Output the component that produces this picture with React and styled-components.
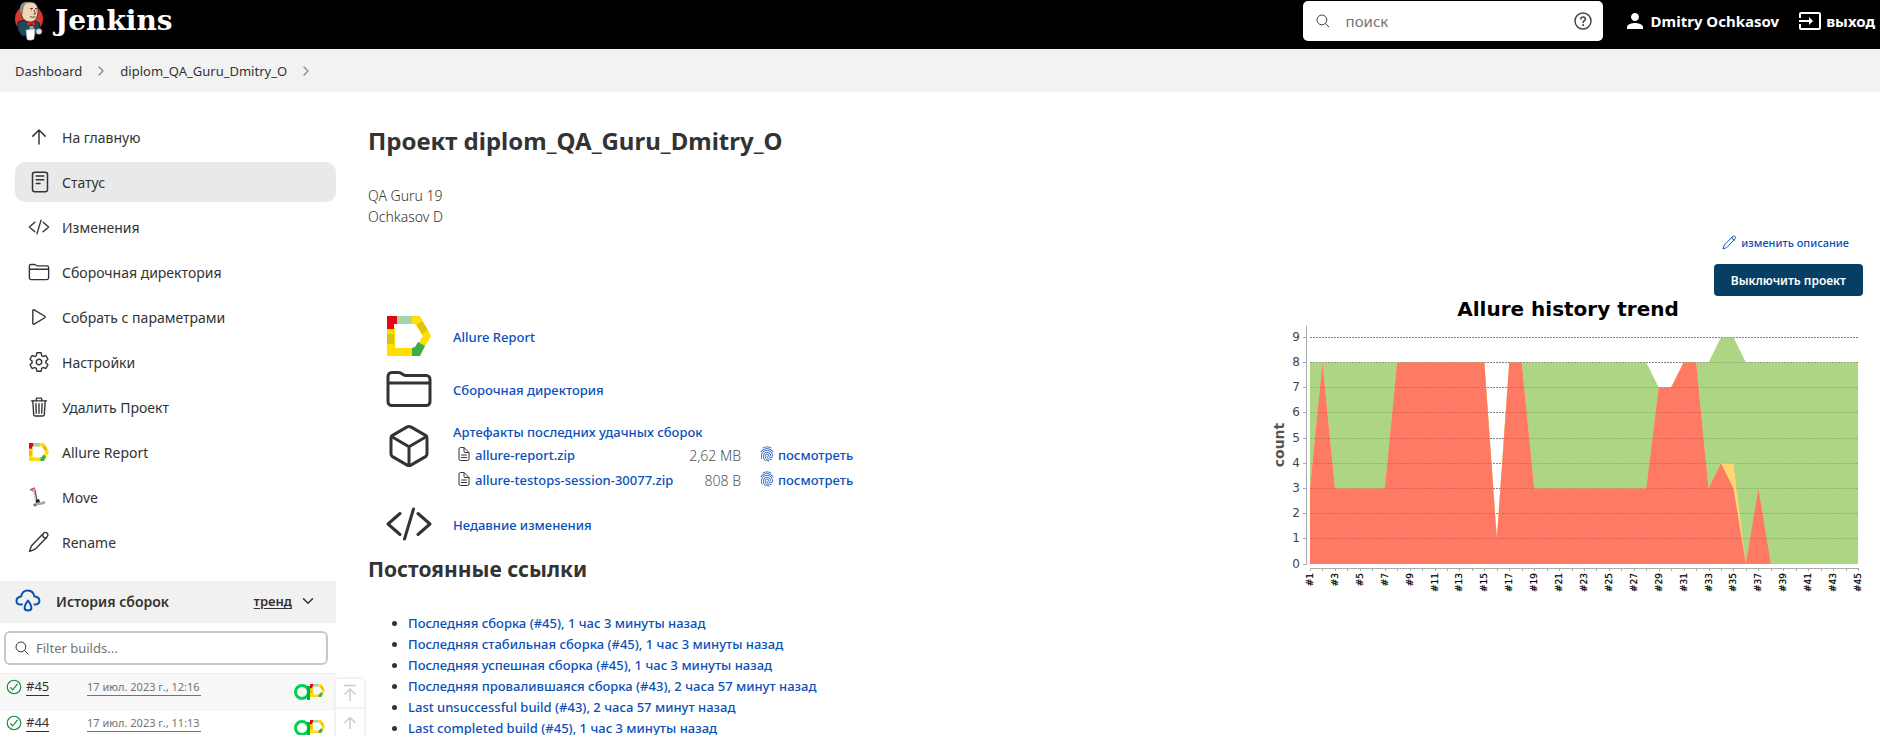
import React from "react";
import styled, { createGlobalStyle, css } from "styled-components";
import {
  IoReaderOutline,
  IoCodeSlashOutline,
  IoFolderOutline,
  IoPlayOutline,
  IoSettingsOutline,
  IoTrashOutline,
  IoCubeOutline,
  IoDocumentTextOutline,
  IoFingerPrintOutline,
  IoSearchOutline,
  IoChevronDownOutline,
  IoChevronForwardOutline,
  IoCheckmarkCircleOutline,
} from "react-icons/io5";
import { MdInput, MdPerson } from "react-icons/md";

const color = {
  text: "#333",
  link: "#0b50b8",
  muted: "#737373",
  bar: "#f2f2f2",
  primary: "#063f63",
};

const Global = createGlobalStyle`
  *, *::before, *::after { box-sizing: border-box; }
  body {
    margin: 0;
    background: #fff;
    color: ${color.text};
    font-family: "Noto Sans", "Open Sans", sans-serif;
    font-size: 13px;
    line-height: 21px;
  }
  h1, h2, p, ul { margin: 0; padding: 0; }
  a { color: inherit; text-decoration: none; }
  svg { display: block; flex-shrink: 0; }
`;

const Page = styled.div`
  height: 100vh;
  overflow: hidden;
`;

/* ---------- header ---------- */

const Header = styled.header`
  display: flex;
  align-items: center;
  height: 49px;
  padding: 1px 5px 8px 15px;
  background: #000;
  color: #fff;
`;

const Brand = styled.a`
  display: flex;
  align-items: center;
  gap: 12px;
  margin-right: auto;
  font: 700 28px/36px "DejaVu Serif", serif;
`;

const SearchField = styled.label`
  display: flex;
  align-items: center;
  width: 300px;
  height: 40px;
  padding: 0 10px 0 12px;
  border-radius: 5px;
  background: #fff;
  color: #3d444d;
`;

const SearchInput = styled.input`
  flex: 1;
  min-width: 0;
  margin-left: 15px;
  padding: 0;
  border: 0;
  outline: 0;
  background: none;
  font: inherit;
  font-size: 15px;
  color: ${color.text};
  &::placeholder { color: ${color.muted}; opacity: 1; }
`;

const HeaderLink = styled.a`
  display: flex;
  align-items: center;
  gap: 4px;
  margin-left: 19px;
  font-size: 15px;
  font-weight: 700;
`;

const UserLink = styled(HeaderLink)`
  margin-left: 20px;
`;

const Crumbs = styled.nav`
  display: flex;
  align-items: center;
  gap: 12px;
  height: 43px;
  padding: 1px 15px 0;
  background: ${color.bar};
  svg { color: #8a8a8a; }
`;

/* ---------- sidebar ---------- */

const Body = styled.div`
  display: flex;
  align-items: flex-start;
`;

const Side = styled.aside`
  flex: 0 0 336px;
  padding-top: 25px;
`;

const Menu = styled.nav`
  display: flex;
  flex-direction: column;
  gap: 5px;
  padding-left: 15px;
`;

const MenuItem = styled.a`
  display: flex;
  align-items: center;
  gap: 12px;
  height: 40px;
  padding-left: 13px;
  border-radius: 10px;
  font-size: 14px;
  ${(p) => p.$active && css`background: #e9e9e9;`}
`;

const MenuIcon = styled.span`
  display: grid;
  place-items: center;
  width: 22px;
`;

const HistoryHead = styled.div`
  display: flex;
  align-items: center;
  height: 42px;
  margin-top: 19px;
  padding: 0 20px 2px 15px;
  background: #f1f1f1;
`;

const HistoryTitle = styled.h2`
  flex: 1;
  margin-left: 15px;
  font-size: 14px;
  font-weight: 600;
`;

const TrendLink = styled.a`
  margin-right: 8px;
  font-weight: 600;
  text-decoration: underline;
  text-underline-offset: 2px;
`;

const Filter = styled.label`
  display: flex;
  align-items: center;
  height: 34px;
  margin: 8px 8px 8px 4px;
  padding: 0 8px;
  border: 2px solid #c0cbd0;
  border-radius: 6px;
`;

const FilterInput = styled(SearchInput)`
  margin-left: 6px;
  font-size: 13px;
`;

const Builds = styled.table`
  width: 100%;
  table-layout: fixed;
  border-collapse: collapse;
  td { padding: 0; vertical-align: top; }
  td:first-child { width: 87px; }
  td:last-child { width: 60px; }
`;

const BuildRow = styled.tr`
  height: 36px;
  border-top: 1px solid #eee;
  background: ${(p) => (p.$odd ? "#f8f8f8" : "#fff")};
`;

const BuildNumber = styled.a`
  display: flex;
  align-items: center;
  gap: 3px;
  padding: 4px 0 0 5px;
  svg { color: #138a36; }
  span { border-bottom: 1px solid currentColor; line-height: 17px; }
`;

const BuildDate = styled.a`
  display: inline-block;
  margin-top: 5px;
  padding-right: 1px;
  border-bottom: 1px solid currentColor;
  color: ${color.muted};
  font-size: 11px;
  line-height: 16px;
`;

const Badges = styled.div`
  display: flex;
  justify-content: flex-end;
  padding: 10px 11px 0 0;
`;

const ScrollTools = styled.div`
  display: flex;
  flex-direction: column;
  width: 32px;
  margin: 585px 0 0 -2px;
  border: 2px solid #f1f1f1;
  border-radius: 6px;
`;

const ScrollButton = styled.button`
  display: grid;
  place-items: center;
  height: 30px;
  padding: 0;
  border: 0;
  border-bottom: 2px solid #f4f4f4;
  background: #fff;
  color: #ccc;
`;

/* ---------- main ---------- */

const Main = styled.main`
  flex: 1;
  min-width: 0;
  margin-left: 2px;
  padding-top: 30px;
`;

const Title = styled.h1`
  font-size: 24px;
  font-weight: 700;
  line-height: 38px;
`;

const Description = styled.p`
  margin-top: 25px;
  font-size: 14px;
  font-weight: 300;
`;

const Summary = styled.ul`
  display: flex;
  flex-direction: column;
  margin-top: 84px;
  padding-left: 17px;
  list-style: none;
`;

const Link = styled.a`
  color: ${color.link};
  font-weight: 500;
`;

const SummaryItem = styled.li`
  display: flex;
  align-items: ${(p) => (p.$top ? "flex-start" : "center")};
  gap: 20px;
  height: ${(p) => p.$height}px;
  padding-top: ${(p) => (p.$top ? 5 : 0)}px;
  > svg { width: 48px; height: 48px; color: ${color.text}; }
  > ${Link} { padding-top: 3px; }
`;

const Artifacts = styled.table`
  border-collapse: collapse;
  white-space: nowrap;
  td { height: 25px; padding: 0; vertical-align: middle; }
  svg { margin-bottom: 4px; }
`;

const FileCell = styled.td`
  width: 223px;
  > * { display: flex; align-items: center; gap: 3px; }
  svg { color: ${color.text}; margin-left: 3px; }
`;

const SizeCell = styled.td`
  width: 65px;
  text-align: right;
  color: #555;
  font-size: 14px;
  font-weight: 300;
`;

const ViewCell = styled.td`
  > * { display: flex; align-items: center; gap: 3px; margin-left: 18px; }
`;

const Heading = styled.h2`
  margin-top: 3px;
  font-size: 21px;
  font-weight: 700;
  line-height: 32px;
`;

const Permalinks = styled.ul`
  margin-top: 28px;
  padding-left: 40px;
`;

/* ---------- right column ---------- */

const Trend = styled.section`
  display: flex;
  flex-direction: column;
  align-items: flex-end;
  flex: 0 0 600px;
  margin: 140px 17px 0 0;
`;

const EditLink = styled(Link)`
  display: flex;
  align-items: center;
  gap: 4px;
  margin-right: 14px;
  font-size: 11px;
`;

const DisableButton = styled.button`
  height: 32px;
  margin-top: 11px;
  padding: 1px 17px 0;
  border: 0;
  border-radius: 4px;
  background: ${color.primary};
  color: #fff;
  font: 600 12px/20px "Noto Sans", "Open Sans", sans-serif;
`;

/* ---------- drawings ---------- */

const JenkinsLogo = () => (
  <svg width="28" height="40" viewBox="0 0 28 40" aria-hidden="true">
    <ellipse cx="14" cy="18" rx="14" ry="14" fill="#d33833" />
    <path d="M3 21 10 19l5 6 5-5 4 2 2 8-7 5H7l-4-6z" fill="#1d4a5c" stroke="#0e1c22" strokeWidth="1" />
    <path d="M6 9C6 3 10 1 15 1s8 3 8 9c0 8-4 11-8 11C9 21 6 16 6 9z" fill="#f0d6b7" stroke="#3a2d26" strokeWidth=".8" />
    <path d="M5 10C4 4 8 0 13 1c-4 2-5 6-5 12-2 0-3-1-3-3z" fill="#8c8987" />
    <path d="M15 7.500h3M20 7.500h2M16 9h1M20.500 9h1M19 9l1.500 4h-2M15 15.500c2 1 4 1 5.500 0" fill="none" stroke="#50382c" strokeWidth=".9" />
    <path d="M12 20l4 2.500 4-2.500v5l-4-1.500-4 2z" fill="#e02b26" stroke="#721513" strokeWidth=".5" />
    <path d="M14.500 25h4v4h-4z" fill="#8ea6b0" />
    <path d="M11 29l9-1-1 10c-2 1.500-5 1.500-7 .5z" fill="#fff" stroke="#aaa" strokeWidth=".5" />
    <circle cx="24" cy="30.500" r="3" fill="#dfe3e6" stroke="#444" strokeWidth=".5" />
  </svg>
);

const HelpIcon = () => (
  <svg width="20" height="20" viewBox="0 0 20 20" fill="none" stroke="currentColor" strokeWidth="1.500" strokeLinecap="round" aria-hidden="true">
    <circle cx="10" cy="10" r="8" />
    <path d="M7.800 8C7.800 5.200 12.400 5.200 12.400 8c0 1.700-2.300 1.700-2.300 3.600" />
    <path d="M10.100 14v.2" strokeWidth="1.800" />
  </svg>
);

const ArrowIcon = () => (
  <svg width="22" height="22" viewBox="0 0 512 512" fill="none" stroke="currentColor" strokeWidth="34" strokeLinecap="round" strokeLinejoin="round" aria-hidden="true">
    <path d="M112 236L256 92l144 144M256 100v320" />
  </svg>
);

const PencilIcon = ({ size = 22, weight = 32 }) => (
  <svg width={size} height={size} viewBox="0 0 512 512" fill="none" stroke="currentColor" strokeWidth={weight} strokeLinejoin="round" strokeLinecap="round" aria-hidden="true">
    <path d="M358 56c26-30 64-30 88-6s24 62-4 88L190 402c-22 22-34 28-60 38l-96 36 34-98c10-26 16-38 36-60z" />
    <path d="M342 80c0 50 38 86 88 88" />
  </svg>
);

const AllureIcon = ({ width = 20, height = 18 }) => (
  <svg width={width} height={height} viewBox="0 0 44 40" preserveAspectRatio="none" aria-hidden="true">
    <path d="M0 12h8v20h17v8H0z" fill="#ffde00" />
    <path d="M0 18h7v10H0z" fill="#e0c10f" />
    <path d="M0 0h10v8H7v5H0z" fill="#e30613" />
    <path d="M10 0h15v8H10z" fill="#a8d3a6" />
    <path d="M25 0h8l11 20-7 12-6-4 5-8-8-12h-3z" fill="#ffde00" />
    <path d="M35 5l6 9-6 4-5-9z" fill="#e0c10f" />
    <path d="M25 32l3-1 3-5 7 4-5 10h-8z" fill="#3cae47" />
  </svg>
);

const SummaryAllure = () => (
  <svg viewBox="0 0 48 48" aria-hidden="true">
    <g transform="translate(2 4)">
      <AllureIcon width={44} height={40} />
    </g>
  </svg>
);

const TestOpsIcon = () => (
  <svg width="16" height="16" viewBox="0 0 16 16" fill="none" aria-hidden="true">
    <circle cx="8" cy="8" r="6.500" stroke="#00d34f" strokeWidth="3" />
    <path d="M14.500 2v14" stroke="#00b341" strokeWidth="3" />
  </svg>
);

const ScooterIcon = () => (
  <svg width="22" height="22" viewBox="0 0 22 22" fill="none" aria-hidden="true">
    <path d="M2 4l5-2M4 5l3-2" stroke="#d8434a" strokeWidth="1.500" />
    <path d="M6 3l3 14" stroke="#c4c4c4" strokeWidth="3" />
    <path d="M7 4l2 10" stroke="#555" strokeWidth="1" />
    <path d="M5 18l12-3v3l-11 2z" fill="#aaa" />
    <path d="M8 14l3-1 1 3-4 1z" fill="#222" />
    <circle cx="7" cy="19" r="1.500" fill="#777" />
  </svg>
);

const CloudIcon = () => (
  <svg width="26" height="24" viewBox="0 0 26 24" fill="none" stroke={color.link} strokeWidth="2" strokeLinecap="round" strokeLinejoin="round" aria-hidden="true">
    <path d="M7 15.500H6C0 15.500 0 8.500 6 7.500 8-1 18 0 19.500 7.500c6.500.5 6.500 8 0 8" />
    <path d="M13 11.500c-5 7-4 10 0 10s5-3 0-10z" />
  </svg>
);

const ToTopIcon = () => (
  <svg width="16" height="18" viewBox="0 0 16 18" fill="none" stroke="currentColor" strokeWidth="1.500" aria-hidden="true">
    <path d="M2 1.500h12M8 17V5M2.500 10.500L8 5l5.500 5.500" />
  </svg>
);

const UpIcon = () => (
  <svg width="16" height="14" viewBox="0 0 16 14" fill="none" stroke="currentColor" strokeWidth="1.500" aria-hidden="true">
    <path d="M8 13V1.500M2.500 7L8 1.500 13.500 7" />
  </svg>
);

/* ---------- trend chart ---------- */

const ChartSvg = styled.svg`
  font-family: "DejaVu Sans", sans-serif;
`;

const PLOT = { left: 47, right: 595, bottom: 268, unit: 25.2, builds: 45 };
const px = (build) => PLOT.left + ((build - 1) * (PLOT.right - PLOT.left)) / (PLOT.builds - 1);
const py = (count) => PLOT.bottom - count * PLOT.unit;
const toPath = (points) =>
  `M${px(1)} ${py(0)}` + points.map(([b, c]) => `L${px(b)} ${py(c)}`).join("") + `L${px(points[points.length - 1][0])} ${py(0)}Z`;

const total = [[1, 8], [15, 8], [16, 1], [17, 8], [28, 8], [29, 7], [30, 7], [31, 8], [33, 8], [34, 9], [35, 9], [36, 8], [45, 8]];
const broken = [[1, 3], [2, 8], [3, 3], [7, 3], [8, 8], [15, 8], [16, 1], [17, 8], [18, 8], [19, 3], [28, 3], [29, 7], [30, 7], [31, 8], [32, 8], [33, 3], [34, 4], [35, 4], [36, 0]];
const failed = [...broken.slice(0, -2), [35, 3], [36, 0], [37, 3], [38, 0]];
const counts = Array.from({ length: 10 }, (_, n) => n);

const GridLines = ({ opacity }) =>
  counts.slice(1).map((n) => (
    <path key={n} d={`M${PLOT.left} ${Math.floor(py(n)) + 0.5}H${PLOT.right}`} stroke="#000" strokeOpacity={opacity} strokeDasharray="2 1" />
  ));

const TrendChart = () => (
  <ChartSvg width="600" height="300" viewBox="0 0 600 300" role="img" aria-label="Allure history trend">
    <text x="305" y="20" textAnchor="middle" fontSize="20" fontWeight="700">Allure history trend</text>
    <GridLines opacity={0.4} />
    <path d={toPath(total)} fill="#add684" />
    <path d={toPath(broken)} fill="#ffd772" />
    <path d={toPath(failed)} fill="#ff7a65" />
    <GridLines opacity={0.15} />
    {counts.map((n) => (
      <g key={n}>
        <path d={`M40 ${Math.floor(py(n)) + 0.5}h3`} stroke="#aaa" />
        <text x="37" y={Math.floor(py(n)) + 4} textAnchor="end" fontSize="12" fill="#444">{n}</text>
      </g>
    ))}
    <path d="M43.500 30V269M47 272.500H596" stroke="#aaa" fill="none" />
    {Array.from({ length: PLOT.builds }, (_, i) => (
      <path key={i} d={`M${Math.round(px(i + 1)) + 0.5} 272v3`} stroke="#aaa" />
    ))}
    {Array.from({ length: 23 }, (_, i) => i * 2 + 1).map((b) => (
      <text key={b} transform={`translate(${Math.round(px(b)) + 3} 277) rotate(-90)`} textAnchor="end" fontSize="9" stroke="#000" strokeWidth=".2">{`#${b}`}</text>
    ))}
    <text transform="translate(21 149) rotate(-90)" textAnchor="middle" fontSize="14" fontWeight="700" fill="#555">count</text>
  </ChartSvg>
);

/* ---------- data ---------- */

const menu = [
  ["На главную", <ArrowIcon />],
  ["Статус", <IoReaderOutline size={24} />, true],
  ["Изменения", <IoCodeSlashOutline size={22} />],
  ["Сборочная директория", <IoFolderOutline size={22} />],
  ["Собрать с параметрами", <IoPlayOutline size={22} />],
  ["Настройки", <IoSettingsOutline size={22} />],
  ["Удалить Проект", <IoTrashOutline size={22} />],
  ["Allure Report", <AllureIcon />],
  ["Move", <ScooterIcon />],
  ["Rename", <PencilIcon />],
];

const builds = [
  ["#45", "17 июл. 2023 г., 12:16"],
  ["#44", "17 июл. 2023 г., 11:13"],
];

const files = [
  ["allure-report.zip", "2,62 MB"],
  ["allure-testops-session-30077.zip", "808 B"],
];

const permalinks = [
  "Последняя сборка (#45), 1 час 3 минуты назад",
  "Последняя стабильная сборка (#45), 1 час 3 минуты назад",
  "Последняя успешная сборка (#45), 1 час 3 минуты назад",
  "Последняя провалившаяся сборка (#43), 2 часа 57 минут назад",
  "Last unsuccessful build (#43), 2 часа 57 минут назад",
  "Last completed build (#45), 1 час 3 минуты назад",
];

export default function App() {
  return (
    <Page>
      <Global />
      <Header>
        <Brand href="#"><JenkinsLogo />Jenkins</Brand>
        <SearchField>
          <IoSearchOutline size={16} />
          <SearchInput type="search" placeholder="поиск" aria-label="поиск" />
          <HelpIcon />
        </SearchField>
        <UserLink href="#"><MdPerson size={24} />Dmitry Ochkasov</UserLink>
        <HeaderLink href="#"><MdInput size={24} />выход</HeaderLink>
      </Header>
      <Crumbs>
        <a href="#">Dashboard</a>
        <IoChevronForwardOutline size={14} />
        <a href="#">diplom_QA_Guru_Dmitry_O</a>
        <IoChevronForwardOutline size={14} />
      </Crumbs>
      <Body>
        <Side>
          <Menu>
            {menu.map(([label, icon, active]) => (
              <MenuItem key={label} href="#" $active={active}>
                <MenuIcon>{icon}</MenuIcon>{label}
              </MenuItem>
            ))}
          </Menu>
          <HistoryHead>
            <CloudIcon />
            <HistoryTitle>История сборок</HistoryTitle>
            <TrendLink href="#">тренд</TrendLink>
            <IoChevronDownOutline size={16} />
          </HistoryHead>
          <Filter>
            <IoSearchOutline size={16} />
            <FilterInput type="text" placeholder="Filter builds..." aria-label="Filter builds" />
          </Filter>
          <Builds>
            <tbody>
              {builds.map(([number, date], i) => (
                <BuildRow key={number} $odd={i % 2 === 0}>
                  <td><BuildNumber href="#"><IoCheckmarkCircleOutline size={18} /><span>{number}</span></BuildNumber></td>
                  <td><BuildDate href="#">{date}</BuildDate></td>
                  <td><Badges><TestOpsIcon /><AllureIcon width={15} height={13} /></Badges></td>
                </BuildRow>
              ))}
            </tbody>
          </Builds>
        </Side>
        <ScrollTools>
          <ScrollButton aria-label="В начало"><ToTopIcon /></ScrollButton>
          <ScrollButton aria-label="Вверх"><UpIcon /></ScrollButton>
        </ScrollTools>
        <Main>
          <Title>Проект diplom_QA_Guru_Dmitry_O</Title>
          <Description>QA Guru 19<br />Ochkasov D</Description>
          <Summary>
            <SummaryItem $height={50}><SummaryAllure /><Link href="#">Allure Report</Link></SummaryItem>
            <SummaryItem $height={56}><IoFolderOutline /><Link href="#">Сборочная директория</Link></SummaryItem>
            <SummaryItem $height={81} $top>
              <IoCubeOutline />
              <div>
                <Link href="#">Артефакты последних удачных сборок</Link>
                <Artifacts>
                  <tbody>
                    {files.map(([name, size]) => (
                      <tr key={name}>
                        <FileCell><Link href="#"><IoDocumentTextOutline size={16} />{name}</Link></FileCell>
                        <SizeCell>{size}</SizeCell>
                        <ViewCell><Link href="#"><IoFingerPrintOutline size={16} />посмотреть</Link></ViewCell>
                      </tr>
                    ))}
                  </tbody>
                </Artifacts>
              </div>
            </SummaryItem>
            <SummaryItem $height={52}><IoCodeSlashOutline /><Link href="#">Недавние изменения</Link></SummaryItem>
          </Summary>
          <Heading>Постоянные ссылки</Heading>
          <Permalinks>
            {permalinks.map((label) => (
              <li key={label}><Link href="#">{label}</Link></li>
            ))}
          </Permalinks>
        </Main>
        <Trend>
          <EditLink href="#"><PencilIcon size={15} weight={34} />изменить описание</EditLink>
          <DisableButton>Выключить проект</DisableButton>
          <TrendChart />
        </Trend>
      </Body>
    </Page>
  );
}
